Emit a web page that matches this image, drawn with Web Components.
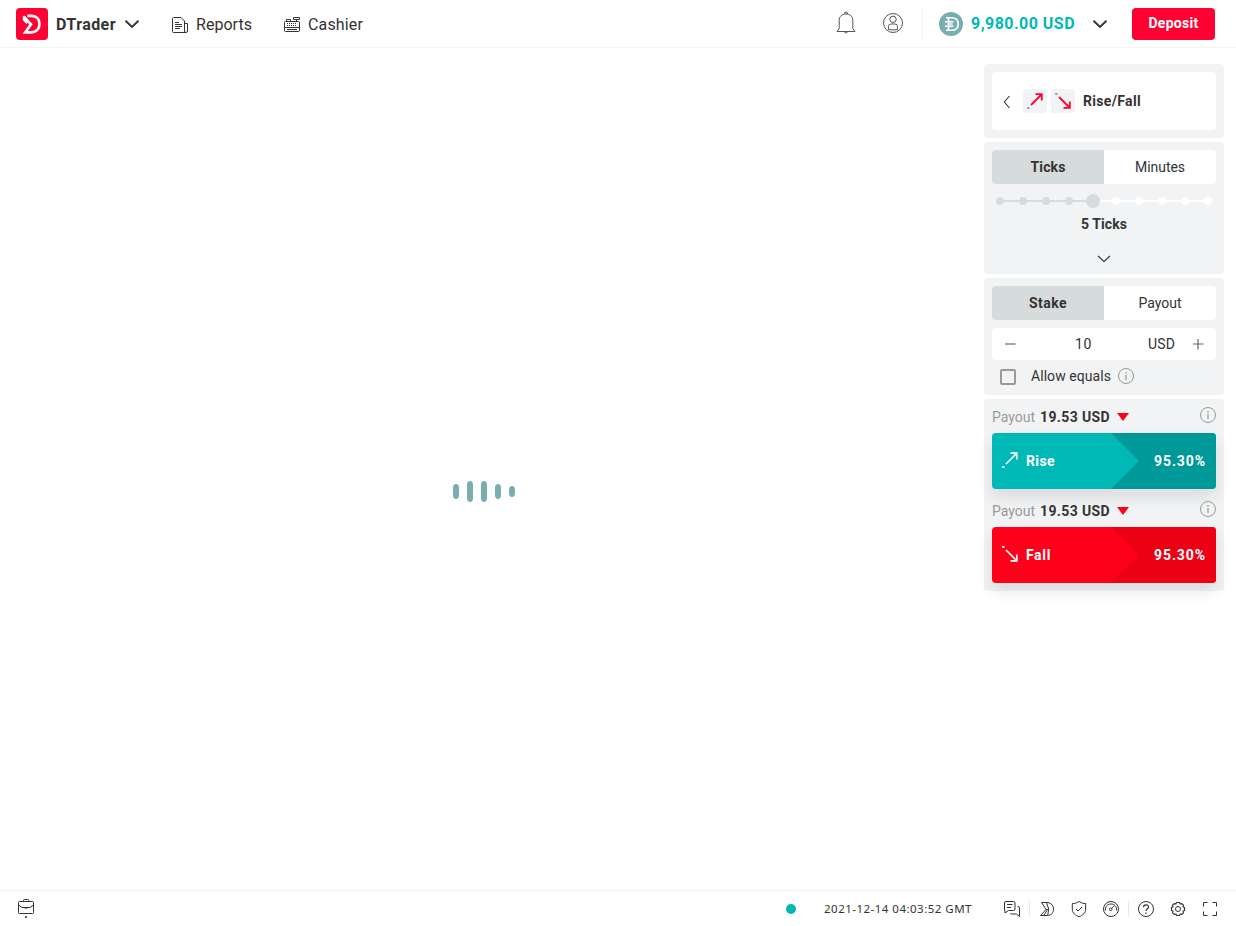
<!DOCTYPE html>
<html lang="en">
<head>
<meta charset="utf-8">
<title>DTrader</title>
<style>
html,body{margin:0;height:100%;background:#fff;overflow:hidden}
body{font:14px/20px Roboto,"Noto Sans",sans-serif;color:#333}
</style>
</head>
<body>
<dt-app></dt-app>
<script>
const define = (name, html, setup) => customElements.define(name, class extends HTMLElement {
  connectedCallback() {
    if (this.shadowRoot) return;
    const t = document.createElement('template');
    t.innerHTML = html;
    this.attachShadow({mode: 'open'}).appendChild(t.content.cloneNode(true));
    if (setup) setup.call(this, this.shadowRoot);
  }
});

/* name: [viewBox width, viewBox height, markup] */
const ICONS = {
  logo: [32,32,'<rect width="32" height="32" rx="4" fill="#ff0033" stroke="none"/><path d="M11.300 7.900h4.500c4.800 0 7.700 3.600 7.700 8.100s-3.200 8.300-7.900 8.300H9.300L15 16.400 7.800 8.400" stroke="#fff" stroke-width="2.700"/><path d="M6.800 7.400v4.600l3.500 4 2.500-2z" fill="#fff" stroke="none"/><path d="M9.300 6.500l5.700 7.300" stroke="#ff0033" stroke-width=".8"/>'],
  down: [16,10,'<path d="M1.500 1.700L8 8l6.500-6.300" stroke-width="1.900"/>'],
  thindown: [14,8,'<path d="M1 1l6 5.500L13 1" stroke-width="1.100"/>'],
  left: [8,14,'<path d="M6.500 1L1.300 7l5.200 6" stroke-width="1.100"/>'],
  reports: [16,16,'<path d="M13.500 15.500H1.500q-1 0-1-1v-13q0-1 1-1H9L12.500 4v10q0 1.500 1.500 1.500t1.500-1.500V6.500h-3M3 5.500h4M3 7.500h7M3 9.500h7M3 11.500h5"/>'],
  cashier: [16,16,'<path d="M.5 11.500h15v3q0 1-1 1h-13q-1 0-1-1zM.5 11.500v-5q0-1 1-1h13q1 0 1 1v5M2.500 5.500v-2h4v2M12.500 5.500v-2M9.500 1.500h6v2h-6z"/><path d="M3 7.500h10M3 9.500h10" stroke-dasharray="1 1"/><path d="M3 13.500h10"/>'],
  bell: [20,24,'<path d="M1 20.500h18l-2.200-3V9.300C16.800 5.500 14 3 10 3S3.200 5.500 3.200 9.300v8.200zM8.500 3V1.800q1.500-1.500 3 0V3M8.300 21q1.700 2.400 3.400 0"/>'],
  user: [20,20,'<circle cx="10" cy="10" r="9.500"/><circle cx="10" cy="6.300" r="3.200"/><path d="M5.500 16.500v-3q0-2.500 2.500-2.500h4q2.500 0 2.500 2.500v3q-4.500 1-9 0z"/>'],
  demo: [24,24,'<circle cx="12" cy="12" r="12" fill="#7aadb0" stroke="none"/><path d="M7 5.700h5.500c4.500 0 6.700 2.800 6.700 6.300s-2.200 6.300-6.700 6.300H7M9.500 5v14M6 9.700h8.500M6 14.300h8.500M9.500 12h4" stroke="#fff" stroke-width="1.600"/>'],
  rise: [16,16,'<path d="M4 12L14 2"/><path d="M8.500 1.200h6.300v6.300"/><path d="M0 15.200h1.600v-1.200" stroke="var(--tail,currentColor)"/>'],
  fall: [16,16,'<path d="M4 4l10 10"/><path d="M14.800 8.500v6.300H8.500"/><path d="M0 .800h1.600v1.200" stroke="var(--tail,currentColor)"/>'],
  info: [16,16,'<circle cx="8" cy="8" r="7.500"/><path d="M8 7v5M8 4v1.500" stroke-width="1.300"/>'],
  tri: [12,8,'<path d="M0 0h12L6 8z" fill="#ff001a" stroke="none"/>'],
  minus: [12,12,'<path d="M1 6h10.500" stroke-width="1.200"/>'],
  plus: [12,12,'<path d="M1 6h10.500M6 1v10.500" stroke-width="1.200"/>'],
  bag: [16,18,'<path d="M1.500 2.500h13q1 0 1 1v10q0 1-1 1h-13q-1 0-1-1v-10q0-1 1-1zM5.500 2.500v-1q0-1 1-1h3q1 0 1 1v1M.5 6l3.500 2.500h8L15.500 6M6 8.500q2 1.500 4 0"/><path d="M7 17h2v2H7z" fill="#555" stroke="none"/>'],
  chat: [16,16,'<path d="M4.500 9.500L1 12V9.500H.5V2q0-1.500 1.500-1.500h7.500q1.500 0 1.500 1.500v6q0 1.500-1.500 1.500zM3 3.500h5.500M3 6.500h4M13.500 5.500H14q1.500 0 1.500 1.500v8.500l-3-2.500H7.500q-1 0-1-1"/>'],
  deriv: [16,16,'<path d="M2.500 1.500H9c3 .500 5.500 3 5.500 6.500 0 4-2.500 6.500-6 6.500H1.500L7 8.500zM7.500 1.500L9.700 8l-1 6.500M7 8.500h1.500L5 14"/>'],
  shield: [16,16,'<path d="M8 .500q3.500 2.500 6.700 2v5.500c0 4-3 6.500-6.700 7.700C4.300 14.500 1.300 12 1.300 8V2.500Q4.500 3 8 .500zM5 8l2 2 4-4"/>'],
  gauge: [16,16,'<circle cx="8" cy="8" r="7.500"/><circle cx="7.700" cy="8.300" r="1.300"/><path d="M8.700 7.300L11.500 4.500M2.500 9.500C2 5.500 4.500 3 8 3s6 2.500 5.500 6.500"/>'],
  help: [16,16,'<circle cx="8" cy="8" r="7.500"/><path d="M5.500 6.300C5.500 3 10.500 3 10.500 6c0 2-2.500 2-2.500 4M8 11.500v1.400" stroke-width="1.200"/>'],
  gear: [16,16,'<circle cx="8" cy="8" r="2.500"/><path d="M6.500 1.500h3l.7 1.500 1.600-.4 1.600 1.600-.4 1.600 1.500.7v3l-1.500.7.4 1.600-1.600 1.600-1.600-.4-.7 1.500h-3L5.800 13l-1.600.4-1.600-1.600.4-1.600-1.500-.7v-3L3 5.800l-.4-1.600 1.600-1.600 1.600.4z" stroke-linejoin="round" stroke-width="1.200"/>'],
  full: [16,16,'<path d="M1.500 5.500V1.500H5.500M10.500 1.500h4v4M14.500 10.500v4h-4M5.500 14.500h-4v-4"/>']
};
define('dt-icon', '<style>:host{display:block;flex:none}svg{display:block;width:100%;height:100%;overflow:visible;fill:none;stroke:currentColor}</style>', function (root) {
  const [w, h, body] = ICONS[this.getAttribute('name')];
  this.style.width = w + 'px';
  this.style.height = h + 'px';
  root.innerHTML += `<svg viewBox="0 0 ${w} ${h}">${body}</svg>`;
});

/* A label whose tracking is adjusted to occupy a given width. */
define('dt-label', '<style>:host{display:block;white-space:nowrap;flex:none}:host([bold]){font-weight:700}span{display:inline-block}</style><span><slot></slot></span>', function (root) {
  const want = +this.getAttribute('w'), span = root.querySelector('span');
  const s = (want - span.getBoundingClientRect().width) / this.textContent.length;
  span.style.letterSpacing = s + 'px';
  this.style.width = want + 'px';
});

define('dt-header', `<style>
:host{display:flex;align-items:center;height:47px;border-bottom:1px solid #f2f3f4;padding:0 21px 0 16px;font-size:16px;flex:none}
.brand{margin-left:8px}.brand,.nav{padding-top:2px}.d1{margin:1px 0 0 8px}.r{margin:2px 8px 0 32px}.c{margin:1px 8px 0 32px}
.sp{flex:1}.bell,.user{color:#555}.user{margin-left:27px;margin-top:-1px}.bell{margin-top:-1px}
i{width:1px;height:32px;background:#f2f3f4;margin:0 16px 0 19px}
.bal{color:#00b8b5;margin-left:8px;margin-top:1px}.d2{margin:0 24px 0 17px}
button{all:unset;box-sizing:border-box;width:83px;height:32px;background:#ff0033;color:#fff;border-radius:4px;display:grid;place-items:center;font-size:14px;padding-bottom:2px}
</style>
<dt-icon name="logo"></dt-icon><dt-label class="brand" bold w="60">DTrader</dt-label><dt-icon class="d1" name="down"></dt-icon>
<dt-icon class="r" name="reports"></dt-icon><dt-label class="nav" w="56">Reports</dt-label>
<dt-icon class="c" name="cashier"></dt-icon><dt-label class="nav" w="55">Cashier</dt-label><span class="sp"></span>
<dt-icon class="bell" name="bell"></dt-icon><dt-icon class="user" name="user"></dt-icon><i></i>
<dt-icon name="demo"></dt-icon><dt-label class="bal" bold w="104">9,980.00 USD</dt-label><dt-icon class="d2" name="down"></dt-icon>
<button><dt-label bold w="50">Deposit</dt-label></button>`);

define('dt-card', '<style>:host{display:block;box-sizing:border-box;background:#f2f3f4;border-radius:4px;padding:8px}</style><slot></slot>');

define('dt-tabs', `<style>:host{display:flex;height:34px;border-radius:4px;overflow:hidden;background:#fff}
div{flex:1;display:grid;place-items:center}.on{background:#d6dbdb}</style>
<div class="on"><slot name="on"></slot></div><div><slot name="off"></slot></div>`);

define('dt-steps', `<style>:host{display:flex;justify-content:space-between;align-items:center;height:14px;padding:0 4px;margin-top:10px;
background:linear-gradient(90deg,#d6dbdb 45%,#fff 45%) 8px 6px/208px 2px no-repeat}
i{width:8px;height:8px;border-radius:50%;background:#fff}.on{background:#d6dbdb}.big{width:14px;height:14px;margin:0 -4px 0 -2px}</style>`, function (root) {
  for (let n = 1; n <= 10; n++) {
    const dot = document.createElement('i');
    dot.className = n === 5 ? 'on big' : n < 5 ? 'on' : '';
    root.appendChild(dot);
  }
});

define('dt-amount', `<style>:host{display:flex;align-items:center;height:32px;margin-top:8px;background:#fff;border-radius:4px;padding:0 12px}
.n{margin-left:59px}.u{margin-left:auto;margin-right:17px}dt-icon{color:#666}</style>
<dt-icon name="minus"></dt-icon><dt-label class="n" w="17">10</dt-label><dt-label class="u" w="27">USD</dt-label><dt-icon name="plus"></dt-icon>`);

define('dt-check', `<style>:host{display:flex;align-items:center;height:20px;margin-top:6px;padding-left:8px}
i{box-sizing:border-box;width:16px;height:16px;border:2px solid #999;border-radius:2px;margin:2px 15px 0 0}dt-icon{color:#999;margin-left:7px}</style>
<i></i><dt-label w="80">Allow equals</dt-label><dt-icon name="info"></dt-icon>`);

define('dt-purchase', `<style>:host{display:block}
.p{display:flex;align-items:center;height:20px;color:#999}.a{color:#333;margin:0 7px 0 5px}.t{margin-top:-1px}.i{margin:-4px 0 0 auto}
.b{display:flex;align-items:center;height:56px;margin-top:6px;border-radius:4px;color:#fff;overflow:hidden;background:var(--base)}
.sh{border-radius:4px;box-shadow:0 8px 16px rgba(0,0,0,.1)}
.l{margin:-2px 8px 0 10px;stroke-width:1.700}
.pct{box-sizing:border-box;margin-left:auto;width:105px;height:56px;padding-left:43px;display:flex;align-items:center;background:var(--dark);clip-path:polygon(0 0,100% 0,100% 100%,0 100%,28px 50%)}
</style><div class="p"><dt-label w="43">Payout</dt-label><dt-label class="a" bold w="70">19.53 USD</dt-label><dt-icon class="t" name="tri"></dt-icon><dt-icon class="i" name="info"></dt-icon></div>
<div class="sh"><div class="b"></div></div>`, function (root) {
  const rise = this.getAttribute('kind') === 'rise';
  this.style.setProperty('--base', rise ? '#00b8b5' : '#ff001a');
  this.style.setProperty('--dark', rise ? '#009999' : '#eb0014');
  root.querySelector('.b').innerHTML = `<dt-icon class="l" name="${rise ? 'rise' : 'fall'}"></dt-icon><dt-label bold w="${rise ? 29 : 25}">${rise ? 'Rise' : 'Fall'}</dt-label><div class="pct"><dt-label bold w="52">95.30%</dt-label></div>`;
});

define('dt-contract', `<style>:host{display:flex;align-items:center;height:58px;background:#fff;border-radius:4px;padding-left:11px}
.left{margin-top:2px}.box{width:24px;height:24px;border-radius:4px;background:#f2f3f4;display:grid;place-items:center;color:#ff0033;--tail:#7aadb0;margin-right:4px}
.box dt-icon{stroke-width:1.800}.first{margin-left:12px}dt-label{margin-left:4px}</style>
<dt-icon class="left" name="left"></dt-icon><div class="box first"><dt-icon name="rise"></dt-icon></div><div class="box"><dt-icon name="fall"></dt-icon></div><dt-label bold w="58">Rise/Fall</dt-label>`);

define('dt-loader', `<style>:host{display:flex;align-items:center;justify-content:center;gap:8px}
i{width:6px;background:#7aadb0;border-radius:3px/4px}</style>
<i style="height:15px"></i><i style="height:21px"></i><i style="height:21px"></i><i style="height:15px"></i><i style="height:11px"></i>`);

define('dt-footer', `<style>:host{display:flex;align-items:center;height:35px;border-top:1px solid #f2f3f4;padding:0 18px 0 18px;flex:none}
.bag{margin-top:-1px}.dot{width:10px;height:10px;border-radius:50%;background:#00b8b5;margin:1px 28px 0 auto}
.time{font:11.500px/20px "Noto Sans",sans-serif;margin:0 32px 0 0}
.g{display:flex;gap:16px;margin-top:1px}b{width:1px;height:16px;background:#e6e9e9;margin:1px 9px 0 9px}
</style><dt-icon class="bag" name="bag"></dt-icon><span class="dot"></span><dt-label class="time" w="148">2021-12-14 04:03:52 GMT</dt-label>
<div class="g"><dt-icon name="chat"></dt-icon></div><b></b>
<div class="g"><dt-icon name="deriv"></dt-icon><dt-icon name="shield"></dt-icon><dt-icon name="gauge"></dt-icon></div><b></b>
<div class="g"><dt-icon name="help"></dt-icon><dt-icon name="gear"></dt-icon><dt-icon name="full"></dt-icon></div>`);

define('dt-app', `<style>:host{display:flex;flex-direction:column;height:100vh}
main{flex:1;display:flex;padding:16px 12px 0 0;min-height:0}
.chart{flex:1;display:grid;place-items:center;padding:0 16px 0 0;margin-top:-1px;margin-bottom:-30px}
aside{width:240px;display:flex;flex-direction:column;gap:4px}
.c1{height:74px}.c2{height:132px}.c3{height:117px}.c4{height:192px}
.ticks{width:46px;margin:6px auto 0}.more{margin:21px auto 0}
.second{margin-top:12px}
</style><dt-header></dt-header>
<main><div class="chart"><dt-loader></dt-loader></div>
<aside><dt-card class="c1"><dt-contract></dt-contract></dt-card>
<dt-card class="c2"><dt-tabs><dt-label slot="on" bold w="35">Ticks</dt-label><dt-label slot="off" w="50">Minutes</dt-label></dt-tabs>
<dt-steps></dt-steps><dt-label class="ticks" bold w="46">5 Ticks</dt-label><dt-icon class="more" name="thindown"></dt-icon></dt-card>
<dt-card class="c3"><dt-tabs><dt-label slot="on" bold w="38">Stake</dt-label><dt-label slot="off" w="43">Payout</dt-label></dt-tabs>
<dt-amount></dt-amount><dt-check></dt-check></dt-card>
<dt-card class="c4"><dt-purchase kind="rise"></dt-purchase><dt-purchase class="second" kind="fall"></dt-purchase></dt-card></aside></main>
<dt-footer></dt-footer>`);
</script>
</body>
</html>
